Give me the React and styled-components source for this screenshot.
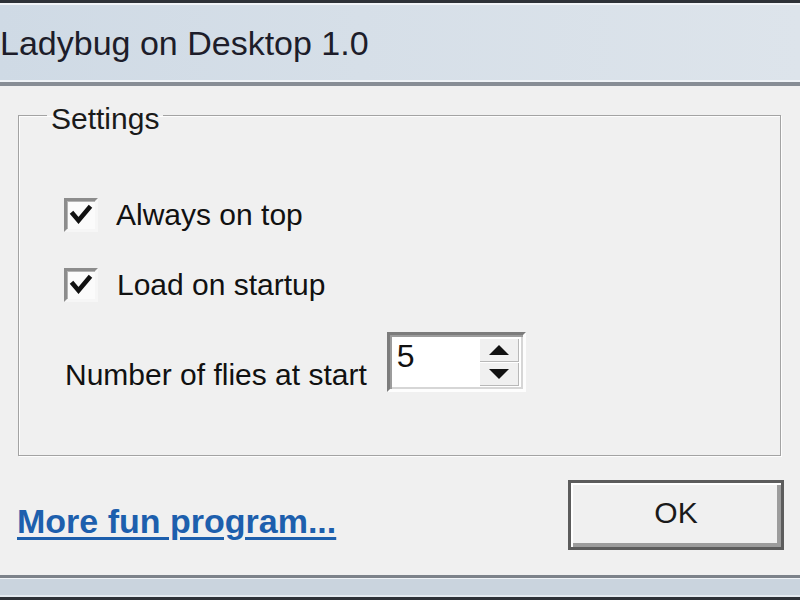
import styled, { createGlobalStyle } from "styled-components";

const GlobalStyle = createGlobalStyle`
  html, body {
    margin: 0;
    padding: 0;
    background: #f0f0f0;
    overflow: hidden;
  }
  #root {
    width: 800px;
    height: 600px;
  }
`;

function CheckMark() {
  return (
    <svg width="26" height="26" viewBox="0 0 26 26">
      <path d="M5 12 L10.5 18.5 L21 6" fill="none" stroke="#111" strokeWidth="4.6" strokeLinejoin="miter" strokeLinecap="square" />
    </svg>
  );
}

function Option({ label, checked, nudge }) {
  return (
    <OptionRow>
      <CheckBox>{checked && <CheckMark />}</CheckBox>
      <OptionLabel $nudge={nudge}>{label}</OptionLabel>
    </OptionRow>
  );
}

function SpinBox({ value }) {
  return (
    <SpinFrame>
      <SpinValue>{value}</SpinValue>
      <SpinButtons>
        <SpinButton>
          <svg width="22" height="12" viewBox="0 0 22 12">
            <path d="M11 1 L21 11 L1 11 Z" fill="#111" />
          </svg>
        </SpinButton>
        <SpinButton>
          <svg width="22" height="12" viewBox="0 0 22 12">
            <path d="M1 1 L21 1 L11 11 Z" fill="#111" />
          </svg>
        </SpinButton>
      </SpinButtons>
    </SpinFrame>
  );
}

export default function App() {
  return (
    <>
      <GlobalStyle />
      <Window>
        <TitleBar>
          <Title>Ladybug on Desktop 1.0</Title>
        </TitleBar>
        <Body>
          <Group>
            <Legend>Settings</Legend>
            <GroupContent>
              <Option checked label="Always on top" />
              <Option checked label="Load on startup" nudge />
              <SpinRow>
                <SpinLabel>Number of flies at start</SpinLabel>
                <SpinBox value="5" />
              </SpinRow>
            </GroupContent>
          </Group>
          <Footer>
            <MoreLink href="#">More fun program...</MoreLink>
            <OkButton>OK</OkButton>
          </Footer>
        </Body>
        <BottomFrame />
      </Window>
    </>
  );
}

const Window = styled.div`
  display: flex;
  flex-direction: column;
  width: 800px;
  height: 600px;
  font-family: "Liberation Sans", Arial, sans-serif;
  color: #111;
`;

const TitleBar = styled.div`
  box-sizing: border-box;
  height: 86px;
  display: flex;
  align-items: center;
  border-top: 3px solid #2e3238;
  background: linear-gradient(to right, #cfdae5 0%, #d6dfe8 45%, #dde4eb 100%);
  box-shadow: inset 0 2px #f1f4f8, inset 0 -4px #878d95, inset 0 -6px #eef2f6;
  overflow: hidden;
`;

const Title = styled.div`
  font-size: 34px;
  line-height: 40px;
  color: #1d1d2a;
  padding-bottom: 3px;
  white-space: nowrap;
`;

const Body = styled.div`
  flex: 1;
  display: flex;
  flex-direction: column;
  padding: 8px 19px 0 18px;
`;

const Group = styled.fieldset`
  margin: 0;
  padding: 0;
  min-width: 0;
  border: 1px solid #a3a3a3;
  box-shadow: inset 1px 1px #fdfdfd, 1px 1px #fdfdfd;
`;

const Legend = styled.legend`
  margin-left: 28px;
  padding: 8px 4px 0;
  font-size: 30px;
  line-height: 34px;
  color: #1a1a1a;
`;

const GroupContent = styled.div`
  display: flex;
  flex-direction: column;
  gap: 36px;
  padding: 62px 0 63px 45px;
`;

const OptionRow = styled.div`
  display: flex;
  align-items: center;
  gap: 18px;
  height: 34px;
`;

const CheckBox = styled.div`
  box-sizing: border-box;
  width: 34px;
  height: 34px;
  display: flex;
  align-items: center;
  justify-content: center;
  background: #fbfbfb;
  border: 3px solid;
  border-color: #8c8c8c #f6f6f6 #f6f6f6 #8c8c8c;
  box-shadow: inset 1px 1px #b4b4b4;
`;

const OptionLabel = styled.span`
  font-size: 30px;
  line-height: 34px;
  margin-left: ${(p) => (p.$nudge ? "1px" : "0")};
`;

const SpinRow = styled.div`
  display: flex;
  align-items: flex-end;
  gap: 20px;
  margin-top: -6px;
  padding-left: 1px;
`;

const SpinLabel = styled.span`
  font-size: 30px;
  line-height: 34px;
`;

const SpinFrame = styled.div`
  box-sizing: border-box;
  width: 139px;
  height: 60px;
  display: flex;
  align-items: stretch;
  background: #fff;
  border: 3px solid;
  border-color: #7c7c7c #fdfdfd #fdfdfd #7c7c7c;
  box-shadow: inset 2px 2px #9c9c9c, inset -2px -2px #d6d6d6;
  padding: 3px 4px 3px 6px;
`;

const SpinValue = styled.span`
  flex: 1;
  font-size: 32px;
  line-height: 36px;
  padding-left: 1px;
`;

const SpinButtons = styled.div`
  display: flex;
  flex-direction: column;
  width: 40px;
`;

const SpinButton = styled.div`
  flex: 1;
  display: flex;
  align-items: center;
  justify-content: center;
  background: #f0f0f0;
  box-shadow: inset 1px 1px #fff, inset -1px -1px #b8b8b8;
`;

const Footer = styled.div`
  display: flex;
  justify-content: space-between;
  align-items: center;
  margin-top: 24px;
  margin-right: -3px;
  margin-left: -1px;
`;

const MoreLink = styled.a`
  font-size: 34px;
  font-weight: bold;
  color: #1d5fad;
  text-decoration: underline;
  text-decoration-thickness: 3px;
  text-underline-offset: 4px;
  padding-top: 12px;
`;

const OkButton = styled.button`
  box-sizing: border-box;
  width: 216px;
  height: 70px;
  font-family: "Liberation Sans", Arial, sans-serif;
  font-size: 30px;
  color: #1a1a1a;
  background: #f0f0f0;
  border: 3px solid #5c5c5c;
  box-shadow: inset 2px 2px #fff, inset -4px -4px #9c9c9c;
  padding: 0 0 4px 0;
`;

const BottomFrame = styled.div`
  box-sizing: border-box;
  height: 25px;
  background: #cad4de;
  border-top: 3px solid #7c828a;
  border-bottom: 3px solid #2e3238;
  box-shadow: inset 0 1px #eef2f6, inset 0 -2px #e4eaf0;
`;
